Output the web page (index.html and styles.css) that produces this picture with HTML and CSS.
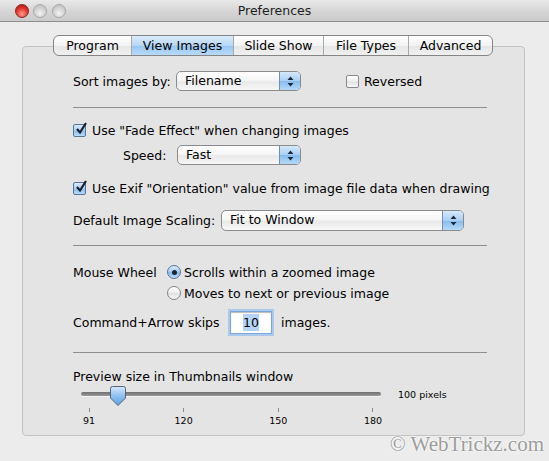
FILE: index.html
```html
<!DOCTYPE html>
<html lang="en">
<head>
  <meta charset="UTF-8" />
  <title>Preferences</title>
  <link rel="stylesheet" href="styles.css">
</head>
<body>

<div class="window">
  <div class="titlebar">
    <span class="light light-close"></span>
    <span class="light light-min"></span>
    <span class="light light-zoom"></span>
    <div class="title">Preferences</div>
  </div>

  <div class="content">
    <div class="tabs">
      <span class="tab tab-program">Program</span>
      <span class="tab tab-view selected">View Images</span>
      <span class="tab tab-slide">Slide Show</span>
      <span class="tab tab-types">File Types</span>
      <span class="tab tab-advanced">Advanced</span>
    </div>

    <div class="group">
      <div class="row row-sort">
        <span class="label label-sort">Sort images by:</span>
        <div class="popup popup-sort">
          <span class="popup-text">Filename</span>
          <span class="stepper"><svg width="7" height="11" viewBox="0 0 7 11"><path d="M3.5 0.5 L6.5 4 H0.5 Z M3.5 10.5 L6.5 7 H0.5 Z" fill="#1c2a40"/></svg></span>
        </div>
        <span class="check check-reversed"><span class="box"></span>Reversed</span>
      </div>

      <div class="sep sep-1"></div>

      <div class="row row-fade">
        <span class="check"><span class="box checked"><svg width="14" height="14" viewBox="0 0 14 14"><path d="M3 7 L6 10.5 L12 1" fill="none" stroke="#1b1f2a" stroke-width="2.2"/></svg></span>Use "Fade Effect" when changing images</span>
      </div>

      <div class="row row-speed">
        <span class="label label-speed">Speed:</span>
        <div class="popup popup-speed">
          <span class="popup-text">Fast</span>
          <span class="stepper"><svg width="7" height="11" viewBox="0 0 7 11"><path d="M3.5 0.5 L6.5 4 H0.5 Z M3.5 10.5 L6.5 7 H0.5 Z" fill="#1c2a40"/></svg></span>
        </div>
      </div>

      <div class="row row-exif">
        <span class="check"><span class="box checked"><svg width="14" height="14" viewBox="0 0 14 14"><path d="M3 7 L6 10.5 L12 1" fill="none" stroke="#1b1f2a" stroke-width="2.2"/></svg></span>Use Exif "Orientation" value from image file data when drawing</span>
      </div>

      <div class="row row-scaling">
        <span class="label label-scaling">Default Image Scaling:</span>
        <div class="popup popup-scaling">
          <span class="popup-text">Fit to Window</span>
          <span class="stepper"><svg width="7" height="11" viewBox="0 0 7 11"><path d="M3.5 0.5 L6.5 4 H0.5 Z M3.5 10.5 L6.5 7 H0.5 Z" fill="#1c2a40"/></svg></span>
        </div>
      </div>

      <div class="sep sep-2"></div>

      <div class="row row-radio1">
        <span class="label label-wheel">Mouse Wheel</span>
        <span class="radio"><span class="dot on"></span>Scrolls within a zoomed image</span>
      </div>
      <div class="row row-radio2">
        <span class="radio"><span class="dot"></span>Moves to next or previous image</span>
      </div>

      <div class="row row-command">
        <span class="label label-command">Command+Arrow skips</span>
        <span class="field"><span class="field-sel">10</span></span>
        <span>images.</span>
      </div>

      <div class="sep sep-3"></div>

      <div class="preview-label">Preview size in Thumbnails window</div>

      <div class="slider-row">
        <div class="slider">
          <div class="track"></div>
          <svg class="thumb" width="16" height="20" viewBox="0 0 16 20">
            <defs>
              <linearGradient id="thumbfill" x1="0" y1="0" x2="0" y2="1">
                <stop offset="0" stop-color="#d7e9fb"/>
                <stop offset="0.5" stop-color="#8fc0f0"/>
                <stop offset="1" stop-color="#5d9fe6"/>
              </linearGradient>
            </defs>
            <path d="M2.5 0.5 H13.5 Q15.5 0.5 15.5 2.5 V12 L8 19.5 L0.5 12 V2.5 Q0.5 0.5 2.5 0.5 Z" fill="url(#thumbfill)" stroke="#56647a"/>
          </svg>
        </div>
        <span class="slider-value">100 pixels</span>
      </div>

      <div class="ticks">
        <div class="tick"><span class="mark"></span><span class="num">91</span></div>
        <div class="tick"><span class="mark"></span><span class="num">120</span></div>
        <div class="tick"><span class="mark"></span><span class="num">150</span></div>
        <div class="tick"><span class="mark"></span><span class="num">180</span></div>
      </div>
    </div>
  </div>

  <div class="watermark">© WebTrickz.com</div>
</div>

</body>
</html>
```

FILE: styles.css
```css
body {
  margin: 0;
  font-family: "DejaVu Sans", Verdana, sans-serif;
  font-size: 12.5px;
  color: #000;
  background: #ececec;
}
.window {
  position: relative;
  width: 549px;
  height: 461px;
  background: #ececec;
  overflow: hidden;
}
.titlebar {
  position: relative;
  height: 21px;
  border-bottom: 1px solid #8e8e8e;
  background: linear-gradient(#e9e9e9, #d3d3d3 60%, #cbcbcb);
}
.light {
  position: absolute;
  top: 4px;
  width: 14px;
  height: 14px;
  border-radius: 50%;
  box-sizing: border-box;
  border: 1px solid #a7a7a7;
  background: radial-gradient(circle at 50% 70%, #f2f2f2, #c8c8c8 70%);
}
.light-close {
  left: 15px;
  border-color: #8a2220;
  background: radial-gradient(circle at 50% 75%, #ff9a8c, #e0332a 55%, #9e1512);
}
.light-min { left: 33px; }
.light-zoom { left: 52px; }
.title {
  text-align: center;
  line-height: 22px;
  color: #1e1e1e;
}
.content {
  padding: 13px 24px 0 22px;
}
.tabs {
  position: relative;
  z-index: 1;
  display: flex;
  margin-left: 31px;
  margin-bottom: -10px;
  width: 440px;
  height: 21px;
  box-sizing: border-box;
  border: 1px solid #858585;
  border-radius: 6px;
  overflow: hidden;
  background: linear-gradient(#ffffff, #f3f3f3 50%, #e6e6e6 51%, #f0f0f0);
}
.tab {
  text-align: center;
  line-height: 19px;
  border-right: 1px solid #a9a9a9;
}
.tab-program { width: 77px; }
.tab-view { width: 101px; }
.tab-slide { width: 89px; }
.tab-types { width: 84px; }
.tab-advanced { flex: 1; border-right: none; }
.tab.selected {
  background: linear-gradient(#dcecfb, #b6d7f6 50%, #98c5f1 51%, #b8daf8);
}
.group {
  height: 390px;
  box-sizing: border-box;
  border: 1px solid #c3c3c3;
  border-radius: 4px;
  background: #e4e4e4;
  padding: 24px 0 0 50px;
}
.row {
  display: flex;
  align-items: center;
}
.label { flex: none; }
.row-sort { height: 20px; }
.label-sort { width: 103px; }
.row-fade { height: 18px; margin-top: 13px; }
.row-speed { height: 20px; margin-top: 6px; padding-left: 50px; }
.label-speed { width: 54px; }
.row-exif { height: 18px; margin-top: 14px; }
.row-scaling { height: 21px; margin-top: 13px; }
.label-scaling { width: 148px; }
.row-radio1 { height: 18px; margin-top: 17px; }
.label-wheel { width: 94px; }
.row-radio2 { height: 18px; margin-top: 3px; padding-left: 94px; }
.row-command { height: 23px; margin-top: 9px; }
.label-command { width: 157px; }

.sep {
  width: 414px;
  height: 1px;
  background: #8f8f8f;
}
.sep-1 { margin-top: 16px; }
.sep-2 { margin-top: 14px; }
.sep-3 { margin-top: 18px; }

.popup {
  display: flex;
  height: 20px;
  box-sizing: border-box;
  border: 1px solid #8b8b8b;
  border-radius: 5px;
  background: linear-gradient(#ffffff, #f6f6f6 45%, #e9e9e9 55%, #f7f7f7);
  overflow: hidden;
}
.popup-sort { width: 125px; }
.popup-speed { width: 124px; }
.popup-scaling { width: 243px; height: 21px; }
.popup-text {
  flex: 1;
  padding-left: 8px;
  line-height: 18px;
}
.stepper {
  width: 20px;
  display: flex;
  align-items: center;
  justify-content: center;
  border-left: 1px solid #6f8fb4;
  background: linear-gradient(#d6e8fa, #a9cff4 50%, #86bbee 51%, #b6d9f8);
}
.check {
  display: flex;
  align-items: center;
}
.check-reversed { margin-left: 45px; }
.box {
  position: relative;
  width: 13px;
  height: 13px;
  margin-right: 6px;
  box-sizing: border-box;
  border: 1px solid #8a8a8a;
  border-radius: 2px;
  background: linear-gradient(#ffffff, #ededed 50%, #e1e1e1 51%, #f8f8f8);
}
.check-reversed .box { margin-right: 5px; }
.box.checked {
  border-color: #5a7396;
  background: linear-gradient(#d8eafb, #a8cdf3 50%, #86baee 51%, #b9dbf8);
}
.box svg {
  position: absolute;
  left: 0;
  top: -3px;
}
.radio {
  display: flex;
  align-items: center;
}
.dot {
  width: 14px;
  height: 14px;
  margin-right: 3px;
  box-sizing: border-box;
  border: 1px solid #838383;
  border-radius: 50%;
  background: linear-gradient(#ffffff, #eeeeee 50%, #e0e0e0 51%, #f8f8f8);
  display: flex;
  align-items: center;
  justify-content: center;
}
.dot.on {
  border-color: #5a7396;
  background: linear-gradient(#d8eafb, #a8cdf3 50%, #86baee 51%, #b9dbf8);
}
.dot.on::after {
  content: "";
  width: 5px;
  height: 5px;
  border-radius: 50%;
  background: #1b2433;
}
.field {
  width: 42px;
  height: 23px;
  box-sizing: border-box;
  margin-right: 9px;
  border: 1px solid #7fa6d6;
  box-shadow: 0 0 0 2px #a9c9ef, inset 0 1px 1px #bbbbbb;
  background: #fff;
  display: flex;
  align-items: center;
  justify-content: center;
}
.field-sel {
  background: #b5d3f6;
  padding: 1px 0;
  line-height: 15px;
}
.preview-label {
  height: 16px;
  line-height: 16px;
  margin-top: 16px;
}
.slider-row {
  display: flex;
  align-items: center;
  height: 20px;
  margin-top: 1px;
}
.slider {
  position: relative;
  width: 300px;
  height: 20px;
  margin-left: 8px;
}
.track {
  position: absolute;
  left: 0;
  right: 0;
  top: 6px;
  height: 4px;
  border-radius: 2px;
  background: linear-gradient(#6f6f6f, #9a9a9a);
  box-shadow: 0 1px 0 #f4f4f4;
}
.thumb {
  position: absolute;
  left: 29px;
  top: 0;
}
.slider-value {
  margin-left: 17px;
  font-size: 9.5px;
  margin-top: -4px;
}
.ticks {
  display: flex;
  justify-content: space-between;
  width: 314px;
  margin-left: 1px;
  margin-top: 2px;
}
.tick {
  width: 30px;
  display: flex;
  flex-direction: column;
  align-items: center;
}
.mark {
  width: 1px;
  height: 4px;
  background: #8a8a8a;
}
.num {
  margin-top: 3px;
  font-size: 9.5px;
  line-height: 12px;
}
.watermark {
  position: absolute;
  right: 5px;
  bottom: 4px;
  font-family: "Liberation Serif", "Times New Roman", serif;
  font-size: 21px;
  color: #9c9c9c;
  text-shadow: 0 0 2px #fff, 0 0 2px #fff;
}
```
